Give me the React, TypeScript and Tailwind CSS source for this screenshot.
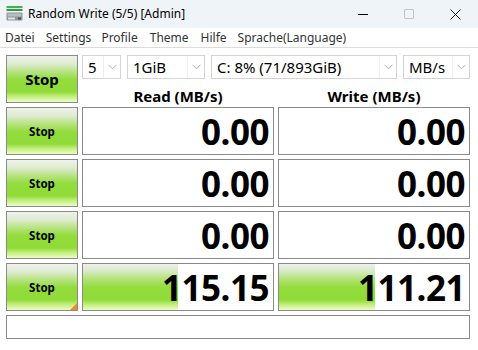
import React from "react";

const font = { fontFamily: '"Noto Sans", "Open Sans", sans-serif' };

function StopButton({ big = false, triangle = false }: { big?: boolean; triangle?: boolean }) {
  return (
    <div
      className={`relative flex items-center justify-center border border-[#8a8a8a] bg-[linear-gradient(to_bottom,#f0f2ee_0%,#dcebcd_18%,#aee270_38%,#92dc3c_52%,#90db38_78%,#c2ee7c_88%,#ecfcc8_100%)] font-bold text-black ${
        big ? "text-[15px]" : "text-[11.5px]"
      }`}
    >
      <span className="mt-[1px]">Stop</span>
      {triangle && (
        <div className="absolute bottom-0 right-0 h-0 w-0 border-b-[7px] border-l-[7px] border-b-[#f08a2c] border-l-transparent" />
      )}
    </div>
  );
}

function Combo({ text, w }: { text: string; w: string }) {
  return (
    <div className={`flex h-[24px] items-stretch border border-[#d4d4d4] bg-white ${w}`}>
      <div className="flex flex-1 items-center overflow-hidden whitespace-nowrap border-r border-[#eeeeee] pl-[5px] text-[15px] leading-none text-black">
        {text}
      </div>
      <div className="flex w-[16px] items-center justify-center">
        <svg width="9" height="6" viewBox="0 0 9 6">
          <path d="M0.5 0.8 L4.5 4.8 L8.5 0.8" fill="none" stroke="#a8a8a8" strokeWidth="0.9" />
        </svg>
      </div>
    </div>
  );
}

function Cell({ value, pct }: { value: string; pct?: number }) {
  return (
    <div className="relative flex items-center justify-end overflow-hidden border border-[#8a8a8a] bg-white pr-[4px]">
      {pct !== undefined && (
        <div
          className="absolute bottom-0 left-0 top-0 bg-[linear-gradient(to_bottom,#eef1ec_0%,#d8eac8_15%,#ade26c_35%,#92dc3c_52%,#90db38_78%,#c0ee78_88%,#ecfcc8_100%)]"
          style={{ width: `${pct}%` }}
        />
      )}
      <span className="relative text-[35px] font-bold leading-none tracking-[-0.5px] text-black">{value}</span>
    </div>
  );
}

export default function App() {
  return (
    <div className="h-[350px] w-[478px] overflow-hidden bg-white" style={font}>
      {/* Title bar */}
      <div className="flex h-[28px] items-center bg-[#eff4f9]">
        <svg className="ml-[6px]" width="17" height="16" viewBox="0 0 17 16">
          <rect x="0.5" y="0" width="16" height="2" fill="#3cb44a" />
          <rect x="0.5" y="3" width="16" height="2" fill="#2e9e3c" />
          <rect x="0.5" y="6.5" width="16" height="8" rx="1" fill="#8e9499" />
          <rect x="1.5" y="7.5" width="14" height="3" fill="#b9bec2" />
          <rect x="2" y="11.5" width="7" height="2" fill="#dfe3e6" />
          <rect x="12" y="11.5" width="3" height="2" fill="#4a4f53" />
        </svg>
        <span className="ml-[5px] text-[12px] text-black">Random Write (5/5) [Admin]</span>
        <div className="ml-auto flex h-full items-center">
          <div className="flex w-[46px] items-center justify-center">
            <div className="mt-[1px] h-[1px] w-[10px] bg-black" />
          </div>
          <div className="flex w-[46px] items-center justify-center">
            <div className="h-[10px] w-[10px] rounded-[1px] border border-[#c4c4c4]" />
          </div>
          <div className="flex w-[46px] items-center justify-center">
            <svg width="11" height="11" viewBox="0 0 11 11">
              <path d="M0.5 0.5 L10.5 10.5 M10.5 0.5 L0.5 10.5" stroke="#1a1a1a" strokeWidth="1" />
            </svg>
          </div>
        </div>
      </div>

      {/* Menu */}
      <div className="flex h-[20px] items-center border-b border-[#dcdcdc] text-[12px] text-[#333333]">
        <span className="ml-[5px]">Datei</span>
        <span className="ml-[11px]">Settings</span>
        <span className="ml-[10px]">Profile</span>
        <span className="ml-[12px]">Theme</span>
        <span className="ml-[12px]">Hilfe</span>
        <span className="ml-[11px]">Sprache(Language)</span>
      </div>

      {/* Main grid */}
      <div className="ml-[6px] mt-[7px] grid w-[464px] grid-cols-[72px_192px_192px] gap-x-[4px]">
        <div className="row-span-2 grid h-[48px]">
          <StopButton big />
        </div>
        <div className="col-span-2 flex h-[24px] gap-[6px]">
          <Combo text="5" w="w-[39px]" />
          <Combo text="1GiB" w="w-[78px]" />
          <Combo text="C: 8% (71/893GiB)" w="w-[186px]" />
          <Combo text="MB/s" w="flex-1" />
        </div>
        <div className="flex h-[24px] items-end justify-center text-[15px] font-bold leading-[14px] text-black">Read (MB/s)</div>
        <div className="flex h-[24px] items-end justify-center text-[15px] font-bold leading-[14px] text-black">Write (MB/s)</div>

        <div className="col-span-3 mt-[4px] grid grid-cols-[72px_192px_192px] grid-rows-[48px_48px_48px_48px] gap-[4px]">
          <StopButton />
          <Cell value="0.00" />
          <Cell value="0.00" />
          <StopButton />
          <Cell value="0.00" />
          <Cell value="0.00" />
          <StopButton />
          <Cell value="0.00" />
          <Cell value="0.00" />
          <StopButton triangle />
          <Cell value="115.15" pct={50} />
          <Cell value="111.21" pct={50.5} />
        </div>

        <div className="col-span-3 mt-[4px] h-[24px] border border-[#8a8a8a] bg-white" />
      </div>
    </div>
  );
}
